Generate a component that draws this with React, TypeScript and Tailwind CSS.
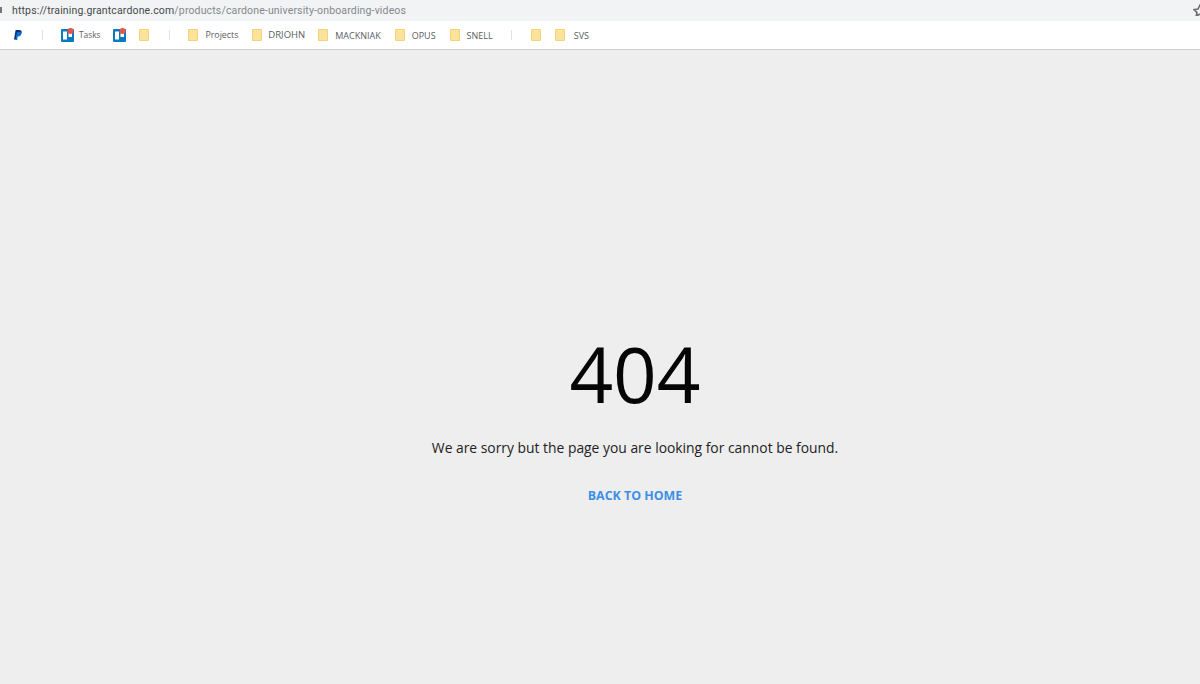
import React from 'react';

const Folder = ({ className = '' }: { className?: string }) => (
  <svg width="10" height="12" viewBox="0 0 10 12" className={`shrink-0 ${className}`}>
    <rect x="0" y="0" width="10" height="12" rx="1" fill="#fde39a" />
    <rect x="0.5" y="0.5" width="9" height="11" rx="0.5" fill="none" stroke="#f3d27c" strokeWidth="1" />
  </svg>
);

const TrelloIcon = ({ className = '' }: { className?: string }) => (
  <svg width="13" height="14" viewBox="0 0 13 14" className={`shrink-0 ${className}`}>
    <rect x="0" y="1" width="13" height="13" rx="1" fill="#0a79bf" />
    <rect x="2" y="3.5" width="4" height="8" fill="#ffffff" />
    <rect x="7.5" y="5" width="3.5" height="4" fill="#ffffff" />
    <circle cx="9.5" cy="3" r="3" fill="#e8534a" />
  </svg>
);

const PayPalIcon = ({ className = '' }: { className?: string }) => (
  <svg width="8" height="10" viewBox="0 0 8 10" className={`shrink-0 ${className}`}>
    <path d="M1.6 0H5.2C7 0 8 1 7.7 2.7 7.3 4.7 6 5.6 4.2 5.6H3L2.4 9.4H0Z" fill="#0b2f87" />
    <path d="M3 2H5.4C6.6 2 7.4 2.6 7.2 3.9 6.9 5.5 5.8 6.4 4.4 6.4H3.7L3.2 10H1.4Z" fill="#0a70c9" />
  </svg>
);

const Separator = ({ className = '' }: { className?: string }) => (
  <div className={`h-[10px] w-px shrink-0 bg-[#e2e2e2] ${className}`} />
);

const Label = ({ children, className = '' }: { children: React.ReactNode; className?: string }) => (
  <span className={`leading-none text-[#5a5d61] ${className}`}>{children}</span>
);

export default function App() {
  return (
    <div className="flex h-[684px] w-[1200px] flex-col overflow-hidden bg-[#eeeeee] font-['Open_Sans',sans-serif]">
      {/* address bar */}
      <div className="relative flex h-[21px] shrink-0 items-center bg-[#f1f3f4] pl-[12px] font-['Roboto',sans-serif] text-[10.5px] tracking-[0.014em]">
        <div className="absolute left-0 top-[7px] h-[6px] w-[2px] bg-[#777777]" />
        <span className="text-[#46494d]">https://training.grantcardone.com</span>
        <span className="text-[#85898e]">/products/cardone-university-onboarding-videos</span>
        <svg width="7" height="12" viewBox="0 0 7 12" className="absolute right-0 top-[4px]">
          <path d="M7 1 9 5 13 5.6 10 8.6 10.8 12 7 10.2 3.2 12 4 8.6 1 5.6 5 5Z" fill="none" stroke="#6a6e72" strokeWidth="1.6" />
        </svg>
      </div>

      {/* bookmarks bar */}
      <div className="flex h-[29px] shrink-0 items-center border-b border-[#cfcfcf] bg-white pl-[14px]">
        <PayPalIcon />
        <Separator className="ml-[20px]" />
        <TrelloIcon className="ml-[18px]" />
        <Label className="ml-[5px] text-[8.3px]">Tasks</Label>
        <TrelloIcon className="ml-[13px]" />
        <Folder className="ml-[13px]" />
        <Separator className="ml-[20px]" />
        <Folder className="ml-[18px]" />
        <Label className="ml-[7px] text-[8.8px]">Projects</Label>
        <Folder className="ml-[14px]" />
        <Label className="ml-[6px] text-[9.5px]">DRJOHN</Label>
        <Folder className="ml-[13px]" />
        <Label className="ml-[7px] text-[9px]">MACKNIAK</Label>
        <Folder className="ml-[14px]" />
        <Label className="ml-[7px] text-[9px]">OPUS</Label>
        <Folder className="ml-[14px]" />
        <Label className="ml-[7px] text-[9px]">SNELL</Label>
        <Separator className="ml-[18px]" />
        <Folder className="ml-[19px]" />
        <Folder className="ml-[14px]" />
        <Label className="ml-[9px] text-[9px]">SVS</Label>
      </div>

      {/* 404 content */}
      <div className="flex flex-col items-center pl-[70px] pt-[277px]">
        <h1 className="text-[76.5px] font-normal leading-[92px] text-[#050505]">404</h1>
        <p className="mt-[19px] text-[13.875px] leading-[20px] text-[#222222]">
          We are sorry but the page you are looking for cannot be found.
        </p>
        <a className="mt-[28px] text-[12.4px] font-bold leading-[20px] text-[#3d8fe8]">BACK TO HOME</a>
      </div>
    </div>
  );
}
